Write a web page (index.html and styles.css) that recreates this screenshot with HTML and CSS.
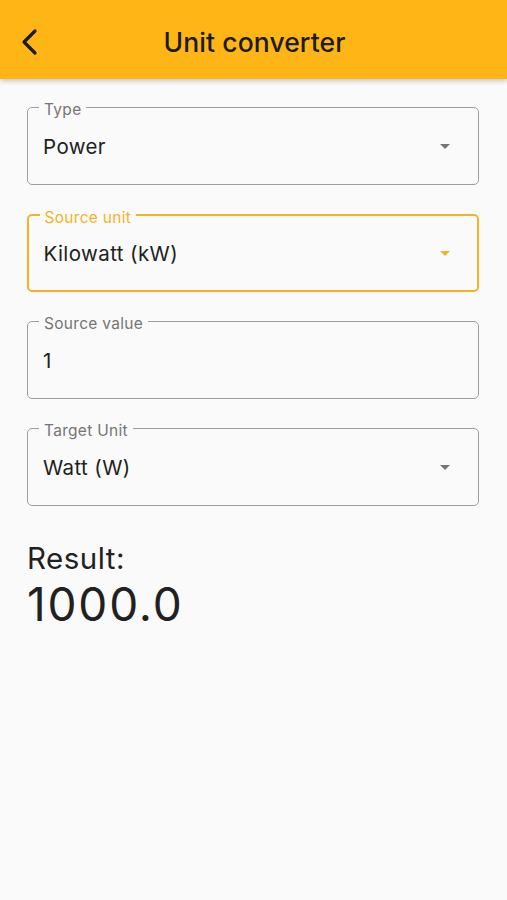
FILE: index.html
```html
<!DOCTYPE html>
<html>
<head>
<meta charset="utf-8">
<link rel="stylesheet" href="styles.css">
</head>
<body>
<header class="appbar">
  <button class="back" aria-label="Back">
    <svg width="20" height="28" viewBox="0 0 20 28"><path d="M15 3 L4 14 L15 25" fill="none" stroke="#1b1b1b" stroke-width="3.2" stroke-linecap="round" stroke-linejoin="round"/></svg>
  </button>
  <h1 class="title">Unit converter</h1>
</header>
<main class="content">
  <div class="field">
    <span class="label">Type</span>
    <span class="value">Power</span>
    <span class="arrow"></span>
  </div>
  <div class="field focused">
    <span class="label">Source unit</span>
    <span class="value">Kilowatt (kW)</span>
    <span class="arrow"></span>
  </div>
  <div class="field">
    <span class="label">Source value</span>
    <span class="value">1</span>
  </div>
  <div class="field">
    <span class="label">Target Unit</span>
    <span class="value">Watt (W)</span>
    <span class="arrow"></span>
  </div>
  <div class="result">
    <div class="result-label">Result:</div>
    <div class="result-value">1000.0</div>
  </div>
</main>
</body>
</html>
```
FILE: styles.css
```css
* { box-sizing: border-box; }
html, body { margin: 0; padding: 0; }
body {
  background: #fafafa;
  font-family: Inter, Roboto, "Noto Sans", sans-serif;
  color: #212121;
  width: 507px;
  height: 900px;
  overflow: hidden;
}
.appbar {
  height: 79px;
  background: #ffb515;
  display: flex;
  align-items: center;
  justify-content: center;
  position: relative;
  box-shadow: 0 2px 5px rgba(0,0,0,0.22);
}
.back {
  position: absolute;
  left: 20px;
  top: 28px;
  background: none;
  border: 0;
  padding: 0;
  display: flex;
}
.title {
  margin: 0;
  font-size: 26.5px;
  font-weight: 500;
  color: #1b1b1b;
  padding-top: 4px;
  padding-left: 2px;
  letter-spacing: 0.1px;
}
.content {
  padding: 28px 28px 0 27px;
  display: flex;
  flex-direction: column;
  gap: 29px;
}
.field {
  position: relative;
  height: 78px;
  border: 1.5px solid #9e9e9e;
  border-radius: 5px;
  display: flex;
  align-items: center;
  padding: 0 28px 0 15px;
}
.field.focused {
  border: 2px solid #f5b324;
  padding-left: 14.5px;
  padding-right: 27.5px;
}
.label {
  position: absolute;
  left: 11px;
  top: -8px;
  padding: 0 5px;
  background: linear-gradient(to bottom, transparent 0, transparent 6px, #fafafa 6px);
  font-size: 15.5px;
  line-height: 20px;
  letter-spacing: 0.3px;
  color: #757575;
}
.focused .label {
  color: #f5b324;
  left: 10.5px;
  top: -8.5px;
  background: #fafafa;
}
.field:not(.focused) .label { background: #fafafa; }
.value {
  flex: 1;
  font-size: 20.5px;
  letter-spacing: 0.4px;
  color: #212121;
}
.arrow {
  width: 0;
  height: 0;
  border-left: 5.5px solid transparent;
  border-right: 5.5px solid transparent;
  border-top: 5.5px solid #757575;
}
.focused .arrow { border-top-color: #f5b324; }
.result {
  margin-top: 3px;
}
.result-label {
  font-size: 29.5px;
  line-height: 40px;
  letter-spacing: 0.5px;
}
.result-value {
  font-size: 46px;
  line-height: 52px;
  letter-spacing: 1.8px;
}
```
